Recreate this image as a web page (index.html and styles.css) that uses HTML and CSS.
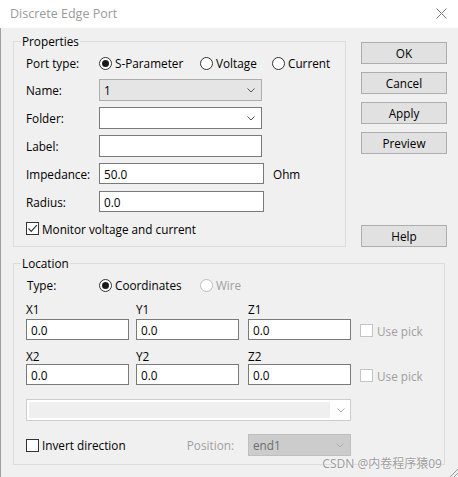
FILE: index.html
```
<!DOCTYPE html>
<html>
<head>
<meta charset="utf-8">
<link rel="stylesheet" href="styles.css">
</head>
<body>
<div class="window">
  <div class="titlebar">
    <span class="title">Discrete Edge Port</span>
    <svg class="close" width="11" height="11" viewBox="0 0 11 11"><path d="M0.5 0.5L10.5 10.5M10.5 0.5L0.5 10.5" stroke="#7a7a7a" stroke-width="1" fill="none"/></svg>
  </div>
  <div class="client">
    <div class="top">
      <section class="group props">
        <div class="group-title">Properties</div>
        <div class="row porttype">
          <span class="lbl">Port type:</span>
          <span class="opt w1"><span class="radio on"></span><span class="otext">S-Parameter</span></span>
          <span class="opt w2"><span class="radio"></span><span class="otext">Voltage</span></span>
          <span class="opt"><span class="radio"></span><span class="otext">Current</span></span>
        </div>
        <div class="row r-name">
          <span class="lbl">Name:</span>
          <div class="combo gray w163"><span class="val">1</span><svg class="chev" width="8" height="5" viewBox="0 0 8 5"><path d="M0.5 0.5L4 4L7.5 0.5" stroke="#555" fill="none"/></svg></div>
        </div>
        <div class="row r-folder">
          <span class="lbl">Folder:</span>
          <div class="combo w163"><span class="val"></span><svg class="chev" width="8" height="5" viewBox="0 0 8 5"><path d="M0.5 0.5L4 4L7.5 0.5" stroke="#555" fill="none"/></svg></div>
        </div>
        <div class="row r-label">
          <span class="lbl">Label:</span>
          <div class="input w163"></div>
        </div>
        <div class="row r-imp">
          <span class="lbl">Impedance:</span>
          <div class="input w165 h21">50.0</div>
          <span class="unit">Ohm</span>
        </div>
        <div class="row r-rad">
          <span class="lbl">Radius:</span>
          <div class="input w165 h21">0.0</div>
        </div>
        <div class="row r-check">
          <span class="check"><svg width="11" height="11" viewBox="0 0 11 11"><path d="M1.5 5.5L4.2 8.3L9.8 2.2" stroke="#333" stroke-width="1.2" fill="none"/></svg></span>
          <span class="ctext">Monitor voltage and current</span>
        </div>
      </section>
      <div class="buttons">
        <div class="btn">OK</div>
        <div class="btn">Cancel</div>
        <div class="btn">Apply</div>
        <div class="btn">Preview</div>
        <div class="btn help">Help</div>
      </div>
    </div>
    <section class="group loc">
      <div class="group-title">Location</div>
      <div class="row r-type">
        <span class="lbl">Type:</span>
        <span class="opt w1"><span class="radio on"></span><span class="otext">Coordinates</span></span>
        <span class="opt w2 disabled"><span class="radio"></span><span class="otext">Wire</span></span>
      </div>
      <div class="coords c1">
        <span class="clbl">X1</span><span class="clbl">Y1</span><span class="clbl">Z1</span><span></span>
        <div class="input h21 w103">0.0</div>
        <div class="input h21 w103">0.0</div>
        <div class="input h21 w103">0.0</div>
        <span class="pick"><span class="check dis"></span><span class="ptext">Use pick</span></span>
      </div>
      <div class="coords c2">
        <span class="clbl">X2</span><span class="clbl">Y2</span><span class="clbl">Z2</span><span></span>
        <div class="input h21 w103">0.0</div>
        <div class="input h21 w103">0.0</div>
        <div class="input h21 w103">0.0</div>
        <span class="pick"><span class="check dis"></span><span class="ptext">Use pick</span></span>
      </div>
      <div class="wide-combo">
        <span class="fill"></span>
        <svg class="chev" width="8" height="5" viewBox="0 0 8 5"><path d="M0.5 0.5L4 4L7.5 0.5" stroke="#a8a8a8" fill="none"/></svg>
      </div>
      <div class="bottom-row">
        <span class="inv"><span class="check"></span><span class="ctext">Invert direction</span></span>
        <span class="poslbl">Position:</span>
        <div class="combo dis-combo w103"><span class="val">end1</span><svg class="chev" width="8" height="5" viewBox="0 0 8 5"><path d="M0.5 0.5L4 4L7.5 0.5" stroke="#aaa" fill="none"/></svg></div>
      </div>
    </section>
  </div>
  <div class="watermark">CSDN @内卷程序猿09</div>
  <svg class="grip" width="10" height="10" viewBox="0 0 10 10"><path d="M10 2L2 10M10 6L6 10" stroke="#999" fill="none"/></svg>
</div>
</body>
</html>
```
FILE: styles.css
```
html, body {
  margin: 0;
  padding: 0;
}
body {
  background: #f0f0f0;
  font-family: "Open Sans", "Noto Sans", sans-serif;
  font-size: 11.75px;
  color: #000;
}
.window {
  position: relative;
  width: 458px;
  height: 477px;
  overflow: hidden;
  background: #f0f0f0;
}
.titlebar {
  height: 28px;
  background: #fff;
  display: flex;
  align-items: center;
  justify-content: space-between;
  padding: 0 11px 2px 10px;
  box-sizing: border-box;
}
.title {
  color: #9a9a9a;
  font-size: 12.5px;
}
.close {
  display: block;
  margin-top: 1px;
}
.client {
  height: 449px;
  border-left: 1px solid #a0a0a0;
  padding-left: 12px;
  box-sizing: border-box;
}
.top {
  display: flex;
  gap: 15px;
}
.group {
  border: 1px solid #dcdcdc;
  padding-left: 12px;
  box-sizing: border-box;
}
.group-title {
  width: max-content;
  height: 15px;
  line-height: 15px;
  margin: -8px 0 0 -5px;
  padding: 0 1px;
  background: #f0f0f0;
}
.props {
  margin-top: 13px;
  width: 333px;
  height: 206px;
}
.row {
  display: flex;
  align-items: center;
}
.lbl {
  width: 73px;
  flex: none;
}
.opt {
  display: flex;
  align-items: center;
}
.opt.w1 { width: 101px; }
.opt.w2 { width: 72px; }
.otext { margin-left: 3px; }
.radio {
  width: 13px;
  height: 13px;
  border: 1px solid #333;
  border-radius: 50%;
  box-sizing: border-box;
  background: #fff;
  display: flex;
  align-items: center;
  justify-content: center;
  flex: none;
}
.radio.on::after {
  content: "";
  width: 7px;
  height: 7px;
  border-radius: 50%;
  background: #1a1a1a;
}
.disabled .radio { border-color: #bcbcbc; }
.disabled .otext { color: #a0a0a0; }
.porttype { margin-top: 3px; height: 22px; }
.r-name { margin-top: 5px; }
.r-folder, .r-label, .r-imp { margin-top: 6px; }
.r-rad { margin-top: 7px; }
.r-check { margin-top: 10px; height: 13px; }
.combo, .input {
  height: 22px;
  box-sizing: border-box;
  border: 1px solid #7a7a7a;
  background: #fff;
  display: flex;
  align-items: center;
  padding-left: 4px;
}
.combo {
  justify-content: space-between;
}
.combo .chev {
  margin-right: 6px;
  display: block;
}
.combo.gray {
  background: #e5e5e5;
  border-color: #adadad;
}
.w163 { width: 163px; }
.w165 { width: 165px; }
.w103 { width: 103px; }
.h21 { height: 21px; }
.unit { margin-left: 9px; }
.check {
  width: 13px;
  height: 13px;
  box-sizing: border-box;
  border: 1px solid #333;
  background: #fff;
  display: flex;
  align-items: center;
  justify-content: center;
  flex: none;
}
.check svg { display: block; }
.check.dis { border-color: #c4c4c4; }
.ctext { margin-left: 3px; }
.buttons {
  margin-top: 14px;
  display: flex;
  flex-direction: column;
  gap: 8px;
}
.btn {
  width: 86px;
  height: 22px;
  box-sizing: border-box;
  border: 1px solid #adadad;
  background: #e1e1e1;
  display: flex;
  align-items: center;
  justify-content: center;
}
.btn.help { margin-top: 63px; }
.loc {
  margin-top: 16px;
  width: 432px;
  height: 202px;
}
.r-type { margin-top: 4px; height: 20px; }
.r-type .lbl { padding-left: 1px; box-sizing: border-box; }
.coords {
  display: grid;
  grid-template-columns: 110px 112px 112px auto;
  grid-template-rows: 14px 21px;
  align-items: center;
}
.c1 { margin-top: 7px; row-gap: 3px; }
.c2 { margin-top: 9px; row-gap: 1px; }
.clbl { line-height: 14px; }
.pick {
  display: flex;
  align-items: center;
  margin-top: 2px;
}
.ptext {
  margin-left: 4px;
  color: #a0a0a0;
}
.wide-combo {
  margin-top: 14px;
  width: 325px;
  height: 22px;
  box-sizing: border-box;
  border: 1px solid #cccccc;
  background: #fff;
  padding: 2px 0 2px 2px;
  display: flex;
  align-items: stretch;
}
.wide-combo .fill {
  flex: 1;
  background: #efefef;
}
.wide-combo .chev {
  align-self: center;
  margin: 0 5px 0 7px;
  display: block;
}
.bottom-row {
  margin-top: 13px;
  height: 22px;
  display: grid;
  grid-template-columns: 110px 112px 112px;
  align-items: center;
}
.inv {
  display: flex;
  align-items: center;
}
.poslbl {
  color: #a0a0a0;
  text-align: right;
  padding-right: 14px;
}
.dis-combo {
  background: #cccccc;
  border-color: #bfbfbf;
  color: #6d6d6d;
}
.watermark {
  position: absolute;
  right: 16px;
  bottom: 6px;
  font-family: "Noto Sans", "Noto Sans CJK SC", sans-serif;
  font-size: 12px;
  line-height: 15px;
  color: #9c9c9c;
  text-shadow: 0 0 2px #fff, 0 0 1px #fff;
}
.grip {
  position: absolute;
  right: 0;
  bottom: 0;
  display: block;
}
```
